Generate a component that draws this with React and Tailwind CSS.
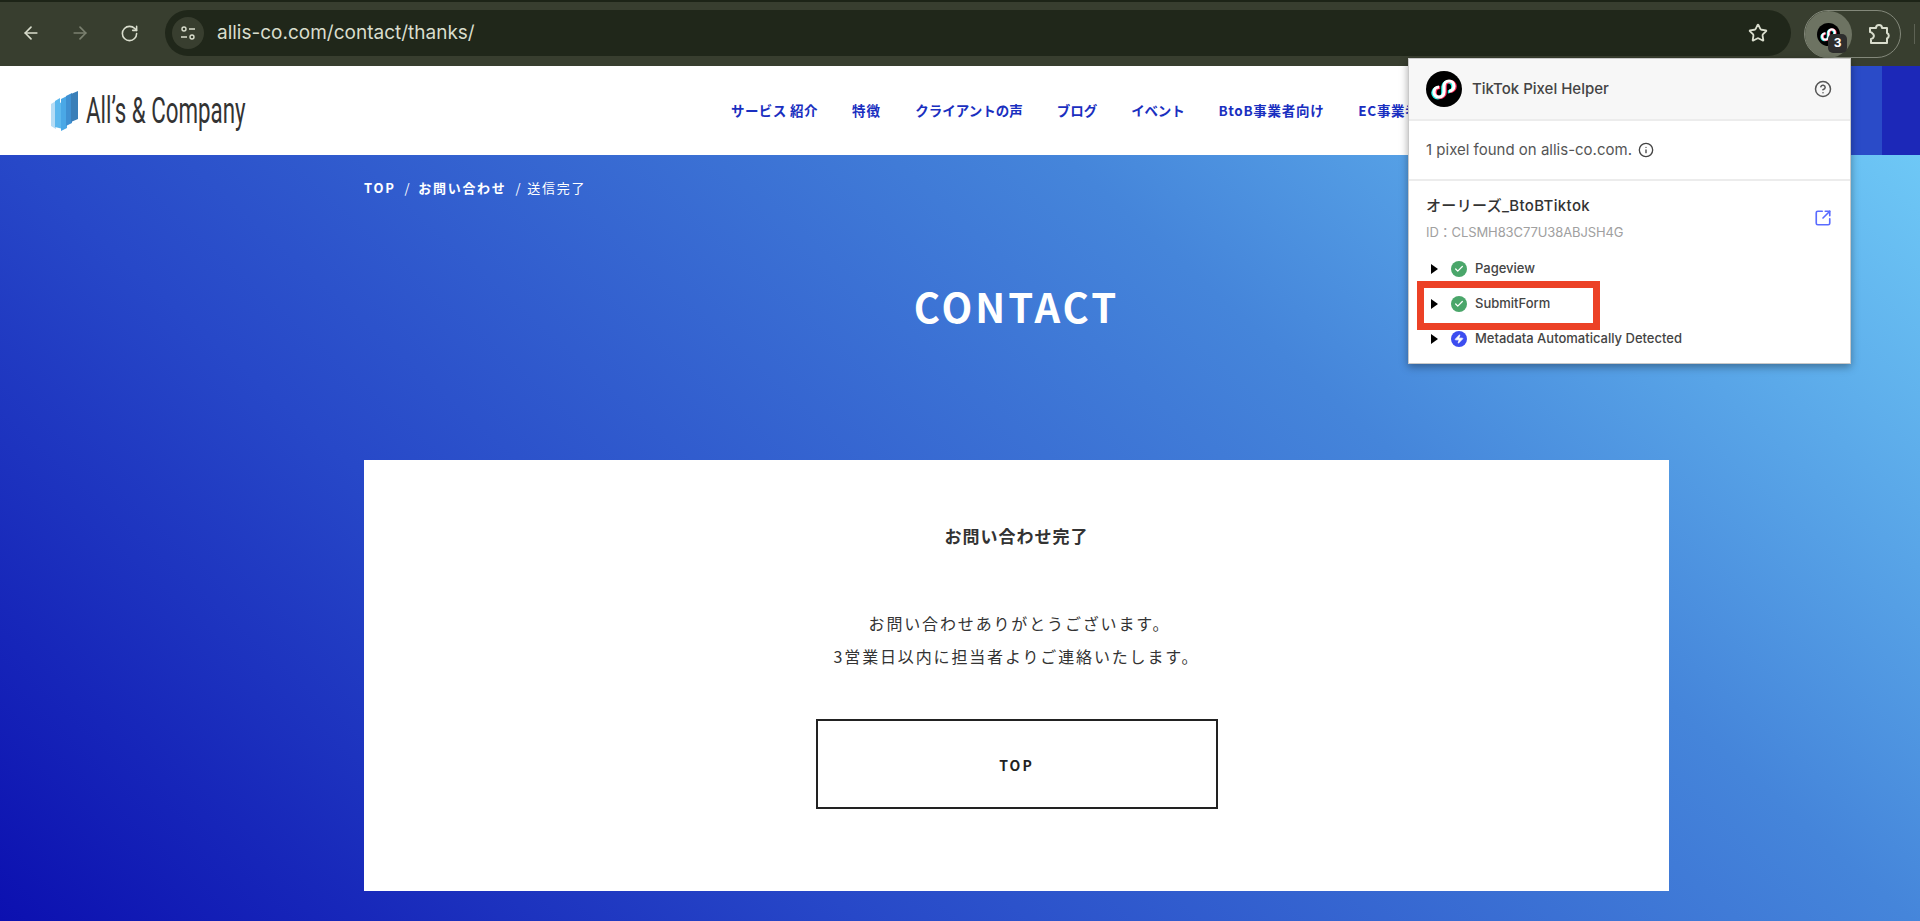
import { ArrowLeft, ArrowRight, RotateCw, Star, CircleHelp, Info, SquareArrowOutUpRight, Check, Zap } from "lucide-react";

const sans = "font-['Noto_Sans_CJK_JP','Noto_Sans',sans-serif]";
const ui = "font-['Inter','Noto_Sans_CJK_JP',sans-serif]";

const navItems = [
  { label: "サービス 紹介", className: "tracking-[0.4px]" },
  { label: "特徴", className: "tracking-[1.2px]" },
  { label: "クライアントの声", className: "tracking-[0px]" },
  { label: "ブログ", className: "tracking-[0px]" },
  { label: "イベント", className: "tracking-[-0.2px]" },
  { label: "BtoB事業者向け", className: "tracking-[0.7px]" },
  { label: "EC事業者向け", className: "tracking-[0.7px]" },
];

const TikTokMark = ({ className }) => {
  const loop = "M13 16a5 5 0 1 0 5 5v-6a5 5 0 1 1 5 5";
  return (
    <svg viewBox="0 0 36 36" className={className}>
      <circle cx="18" cy="18" r="18" fill="#000" />
      <path d={loop} transform="translate(-1.2 0.8)" fill="none" stroke="#25f4ee" strokeWidth="3.2" />
      <path d={loop} transform="translate(1.2 0.4)" fill="none" stroke="#fe2c55" strokeWidth="3.2" />
      <path d={loop} fill="none" stroke="#fff" strokeWidth="3.2" />
    </svg>
  );
};

const LogoMark = () => (
  <svg viewBox="0 0 28 40" className="h-[40px] w-[28px]">
    <path d="M0 13l5-3v28l-5-3z" fill="#b5dcf5" />
    <path d="M4 10l5-3v5l3-2v28l-8-2z" fill="#5cb8ee" />
    <path d="M10 8l6-3v32l-6 3z" fill="#4aa8e6" />
    <path d="M15 5l6-3v30l-6 3z" fill="#3f90d2" />
    <path d="M20 3l7-3v28l-7 3z" fill="#3a7fb8" />
  </svg>
);

const EventRow = ({ label, meta }) => (
  <div className="flex h-[35px] items-center">
    <span className="ml-[5px] h-0 w-0 border-y-[5px] border-l-[7px] border-y-transparent border-l-black" />
    <span className={`ml-[13px] flex h-[16px] w-[16px] items-center justify-center rounded-full ${meta ? "bg-[#3c4df0]" : "bg-[#4aa66a]"}`}>
      {meta ? <Zap size={10} fill="#fff" stroke="#fff" /> : <Check size={10} strokeWidth={3} className="text-white" />}
    </span>
    <span className="ml-[8px] text-[13px] font-medium text-[#444]">{label}</span>
  </div>
);

export default function App() {
  return (
    <div className={`relative flex h-[921px] flex-col overflow-hidden bg-white ${sans}`}>
      {/* browser toolbar */}
      <div className="flex h-[66px] shrink-0 items-start border-t-2 border-[#1d2417] bg-[#383e2f] pt-[8px] text-[#d9ddcd]">
        <div className="flex h-[46px] items-center pl-[21px]">
          <ArrowLeft size={20} />
          <ArrowRight size={20} className="ml-[29px] text-[#7b8070]" />
          <RotateCw size={19} className="ml-[30px]" />
        </div>
        <div className="ml-[26px] flex h-[46px] w-[1626px] items-center rounded-full bg-[#20271a] pl-[7px] pr-[23px]">
          <span className="flex h-[32px] w-[32px] items-center justify-center rounded-full bg-[#383e2f]">
            <svg viewBox="0 0 16 16" className="h-[16px] w-[16px]" fill="none" stroke="currentColor" strokeWidth="1.4">
              <circle cx="4" cy="4" r="2" />
              <path d="M9 4h6M1 12h6" />
              <circle cx="12" cy="12" r="2" />
            </svg>
          </span>
          <span className={`ml-[13px] text-[19px] ${ui}`}>allis-co.com/contact/thanks/</span>
          <Star size={20} strokeWidth={2.2} className="ml-auto" />
        </div>
        <div className="ml-[13px] flex h-[48px] w-[97px] items-center rounded-full border border-[#83887a]">
          <div className="relative flex h-[47px] w-[47px] items-center justify-center rounded-full bg-[#6d7362]">
            <TikTokMark className="h-[23px] w-[23px]" />
            <span className={`absolute left-[23px] top-[23px] flex h-[19px] w-[19px] items-center justify-center rounded-[5px] bg-[#2e2e2e] text-[12px] font-bold text-white ${ui}`}>3</span>
          </div>
          <svg viewBox="0 0 24 24" className="ml-[15px] h-[24px] w-[24px]" fill="none" stroke="currentColor" strokeWidth="2" strokeLinejoin="round">
            <path d="M3 6h6a3 3 0 0 1 6 0h5v5a3 3 0 0 1 0 5.500v4.500H4v-4a3 3 0 0 0 1.500-5.500A3 3 0 0 0 3 10z" />
          </svg>
        </div>
        <div className="ml-[13px] mt-[14px] h-[20px] w-[1px] bg-[#5d6254]" />
      </div>

      {/* site header */}
      <header className="flex h-[89px] shrink-0 items-center bg-white pl-[51px]">
        <LogoMark />
        <span className="ml-[7px] w-[160px] origin-left scale-x-[0.62] whitespace-nowrap font-['Roboto',sans-serif] text-[36px] leading-none text-[#333]">All’s &amp; Company</span>
        <nav className="ml-[485px] flex w-[960px] gap-[34px] whitespace-nowrap text-[13.5px] font-bold text-[#1a2fc0]">
          {navItems.map((item) => (
            <span key={item.label} className={item.className}>{item.label}</span>
          ))}
        </nav>
        <div className="ml-auto flex h-full">
          <div className="w-[31px] bg-[#2a4bc8]" />
          <div className="w-[38px] bg-[#1c28b8]" />
        </div>
      </header>

      {/* hero */}
      <main className="flex-1 bg-[linear-gradient(42deg,#0c10b0_0%,#2748c8_31%,#4585da_69%,#6ec8f6_100%)] pl-[364px] pt-[23px]">
        <div className="w-[1305px]">
          <div className="flex items-center text-[13px] font-bold tracking-[1.7px] text-white">
            <span>TOP</span>
            <span className="ml-[9px] font-normal">/</span>
            <span className="ml-[7px]">お問い合わせ</span>
            <span className="ml-[9px] font-normal">/</span>
            <span className="ml-[5px] font-normal">送信完了</span>
          </div>
          <h1 className="mt-[88px] text-center text-[40px] font-bold leading-none tracking-[3px] text-white">CONTACT</h1>
          <section className="mt-[134px] flex h-[431px] flex-col items-center bg-white pt-[64px] text-[#333]">
            <h2 className="text-[17px] font-bold leading-[24px] tracking-[1px]">お問い合わせ完了</h2>
            <p className="mt-[59px] text-center text-[16px] leading-[33px] tracking-[1.85px]">
              <span className="ml-[6px]">お問い合わせありがとうございます。</span>
              <br />
              3営業日以内に担当者よりご連絡いたします。
            </p>
            <a className="mt-[46px] flex h-[90px] w-[402px] items-center justify-center border-2 border-[#222] pt-[3px] text-[14px] font-bold tracking-[2px] text-[#222]">TOP</a>
          </section>
        </div>
      </main>

      {/* extension popup */}
      <div className={`absolute left-[1408px] top-[58px] h-[306px] w-[443px] border border-[#c9c9c9] bg-white shadow-[0_3px_8px_rgba(0,0,0,0.35)] ${ui}`}>
        <div className="flex h-[62px] items-center border-b-2 border-[#ececec] bg-[#f7f7f7] pl-[17px] pr-[18px]">
          <TikTokMark className="h-[36px] w-[36px]" />
          <span className="ml-[10px] text-[15px] font-medium text-[#444]">TikTok Pixel Helper</span>
          <CircleHelp size={18} className="ml-auto text-[#555]" />
        </div>
        <div className="flex h-[60px] items-center border-b-2 border-[#ececec] pl-[17px] text-[15px] text-[#555]">
          <span>1 pixel found on allis-co.com.</span>
          <Info size={16} className="ml-[6px] text-[#444]" />
        </div>
        <div className="relative pl-[17px] pr-[18px] pt-[13px]">
          <div className="flex items-center justify-between">
            <div>
              <div className="text-[15px] font-medium leading-[24px] tracking-[0.35px] text-[#333]">オーリーズ_BtoBTiktok</div>
              <div className="mt-[5px] text-[13px] leading-[18px] tracking-[-0.1px] text-[#a0a0a0]">ID：CLSMH83C77U38ABJSH4G</div>
            </div>
            <SquareArrowOutUpRight size={18} strokeWidth={2.2} className="text-[#5a6cff]" />
          </div>
          <div className="mt-[10px]">
            <EventRow label="Pageview" />
            <EventRow label="SubmitForm" />
            <EventRow label="Metadata Automatically Detected" meta />
          </div>
          <div className="absolute left-[8px] top-[100px] h-[49px] w-[183px] border-[7px] border-[#ec4126]" />
        </div>
      </div>
    </div>
  );
}
